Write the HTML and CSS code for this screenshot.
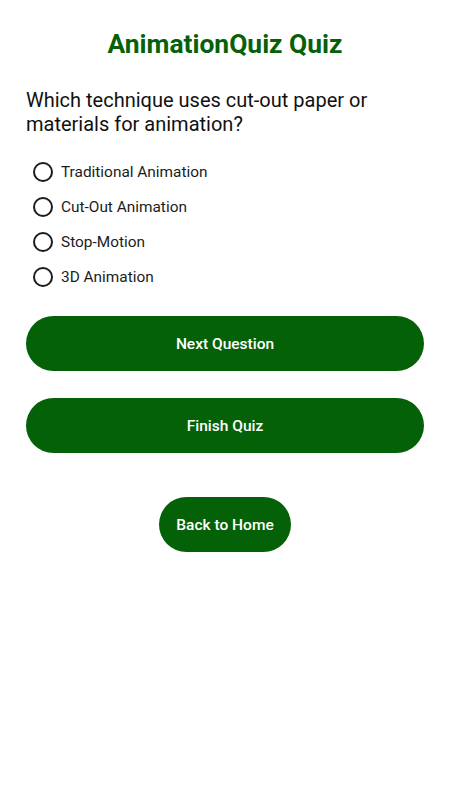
FILE: index.html
```html
<!DOCTYPE html>
<html lang="en">
<head>
    <meta charset="UTF-8">
    <meta name="viewport" content="width=device-width, initial-scale=1.0">
    <title>AnimationQuiz Quiz</title>
    <link rel="stylesheet" href="styles.css">
</head>
<body>
    <div class="quiz">
        <h1 class="quiz-title">AnimationQuiz Quiz</h1>

        <p class="question">Which technique uses cut-out paper or materials for animation?</p>

        <div class="options">
            <label class="option"><input type="radio" name="answer"><span class="radio"></span>Traditional Animation</label>
            <label class="option"><input type="radio" name="answer"><span class="radio"></span>Cut-Out Animation</label>
            <label class="option"><input type="radio" name="answer"><span class="radio"></span>Stop-Motion</label>
            <label class="option"><input type="radio" name="answer"><span class="radio"></span>3D Animation</label>
        </div>

        <button class="btn btn-wide btn-next" type="button">Next Question</button>
        <button class="btn btn-wide" type="button">Finish Quiz</button>
        <button class="btn btn-home" type="button">Back to Home</button>
    </div>
</body>
</html>
```

FILE: styles.css
```css
/* Reset básico */
body, h1, p, label, button {
    margin: 0;
    padding: 0;
    box-sizing: border-box;
}

body {
    font-family: Roboto, "Liberation Sans", sans-serif;
    background-color: #ffffff;
    color: #111111;
}

.quiz {
    display: flex;
    flex-direction: column;
    padding: 28px 26px;
}

.quiz-title {
    text-align: center;
    font-size: 26.4px;
    font-weight: bold;
    color: #056108;
    line-height: 32px;
}

.question {
    margin-top: 28px;
    font-size: 20px;
    line-height: 24px;
    color: #111111;
}

/* Opções */
.options {
    display: flex;
    flex-direction: column;
    margin-top: 18px;
    padding-left: 7px;
}

.option {
    display: flex;
    align-items: center;
    height: 35px;
    font-size: 15.4px;
    color: #1c1c1c;
}

.option input {
    display: none;
}

.radio {
    width: 20px;
    height: 20px;
    border: 2px solid #1c1b22;
    border-radius: 50%;
    box-sizing: border-box;
    margin-right: 8px;
}

/* Botões */
.btn {
    background-color: #056108;
    color: #ffffff;
    border: none;
    border-radius: 28px;
    font-family: Roboto, "Liberation Sans", sans-serif;
    font-size: 15.5px;
    font-weight: 500;
    height: 55px;
    padding-top: 1px;
    cursor: pointer;
}

.btn-wide {
    width: 100%;
    margin-top: 27px;
}

.btn-next {
    margin-top: 22px;
}

.btn-home {
    align-self: center;
    margin-top: 44px;
    padding: 1px 17px 0;
}
```
